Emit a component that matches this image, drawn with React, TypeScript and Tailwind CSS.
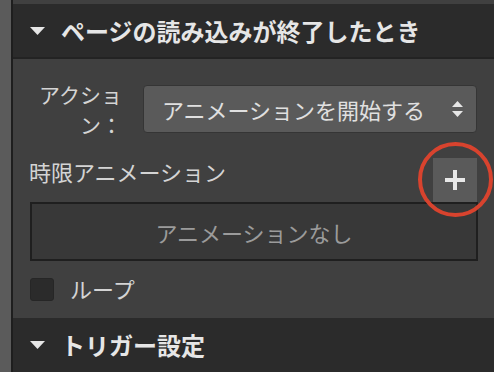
import React from "react";

const Tri = () => (
  <svg width="15" height="8" viewBox="0 0 15 8" className="shrink-0">
    <polygon points="0,0 15,0 7.5,8" fill="#e6e6e6" />
  </svg>
);

export default function App() {
  return (
    <div className="w-[494px] h-[372px] flex overflow-hidden bg-[#404040] font-['Noto_Sans_CJK_JP','Noto_Sans',sans-serif]">
      <div className="w-[11px] shrink-0 bg-[#5b5b5b] border-r-2 border-[#1e1e1e] box-content" />
      <div className="flex-1 flex flex-col pt-[4px]">
        <div className="h-[55px] shrink-0 bg-[#2b2b2b] border-b-2 border-[#232323] flex items-center pl-[17px] gap-[16px]">
          <Tri />
          <span className="text-[24px] leading-[30px] font-bold text-[#e6e6e6]">ページの読み込みが終了したとき</span>
        </div>
        <div className="flex flex-col px-[17px] pt-[20px]">
          <div className="flex items-center h-[60px]">
            <div className="w-[92px] shrink-0 text-right text-[21px] leading-[30px] text-[#d4d4d4]">アクション：</div>
            <div className="ml-[21px] flex-1 h-[48px] rounded-[4px] bg-[#5a5a5a] border border-[#353535] flex items-center justify-between pl-[18px] pr-[13px]">
              <span className="text-[22px] leading-[30px] text-[#e0e0e0]">アニメーションを開始する</span>
              <svg width="11" height="16" viewBox="0 0 11 16">
                <polygon points="5.5,0 11,6 0,6" fill="#e6e6e6" />
                <polygon points="0,10 11,10 5.5,16" fill="#e6e6e6" />
              </svg>
            </div>
          </div>
          <div className="mt-[19px] flex items-start justify-between h-[44px]">
            <span className="text-[22px] leading-[30px] text-[#d4d4d4] -ml-[1px] -mt-[2px]">時限アニメーション</span>
            <div className="relative w-[44px] h-[44px] bg-[#5a5a5a] flex items-center justify-center">
              <svg width="20" height="20" viewBox="0 0 20 20">
                <rect x="8" y="0" width="4" height="20" fill="#e8e8e8" />
                <rect x="0" y="8" width="20" height="4" fill="#e8e8e8" />
              </svg>
              <div className="absolute left-[-15px] top-[-16px] w-[75px] h-[75px] rounded-full border-[4px] border-[#d8432e]" />
            </div>
          </div>
          <div className="h-[59px] border-2 border-[#1f1f1f] bg-[#383838] flex items-center justify-center mr-[-1px]">
            <span className="text-[22px] leading-[30px] text-[#9b9b9b]">アニメーションなし</span>
          </div>
          <div className="mt-[17px] flex items-center gap-[16px] h-[23px]">
            <div className="w-[24px] h-[23px] rounded-[3px] bg-[#2b2b2b] border border-[#262626]" />
            <span className="text-[22px] leading-[30px] text-[#d4d4d4] -mt-[3px]">ループ</span>
          </div>
        </div>
        <div className="mt-[17px] h-[54px] shrink-0 bg-[#2b2b2b] flex items-center pl-[17px] gap-[16px]">
          <Tri />
          <span className="text-[24px] leading-[30px] font-bold text-[#e6e6e6]">トリガー設定</span>
        </div>
      </div>
    </div>
  );
}
